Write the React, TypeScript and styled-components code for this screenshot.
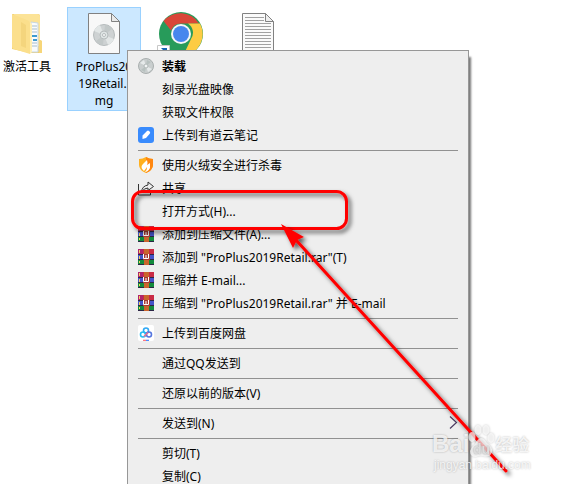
import React from "react";
import styled, { createGlobalStyle } from "styled-components";

const GlobalStyle = createGlobalStyle`
  * { box-sizing: border-box; }
  html, body { margin: 0; background: #fff; overflow: hidden; }
  body, button { font-family: "Noto Sans", "Noto Sans CJK SC", sans-serif; font-size: 12px; color: #000; }
`;

const Desktop = styled.main`
  position: relative;
  height: 100vh;
  overflow: hidden;
  background: #fff;
`;

const IconRow = styled.div`
  display: flex;
  align-items: flex-start;
  gap: 3px;
  padding-top: 7px;
  margin-left: -10px;
`;

const Shortcut = styled.button<{ $selected?: boolean }>`
  display: flex;
  flex-direction: column;
  align-items: center;
  flex: none;
  width: 74px;
  padding: 4px 0 0;
  min-height: 104px;
  border: 1px solid ${(p) => (p.$selected ? "#99d1ff" : "transparent")};
  background: ${(p) => (p.$selected ? "#cce8ff" : "transparent")};
  line-height: 17px;
`;

const Art = styled.span`
  display: block;
  width: 48px;
  height: 46px;
  svg { display: block; }
`;

const Line = styled.span`
  display: block;
  white-space: nowrap;
`;

const Menu = styled.ul`
  position: absolute;
  top: 50px;
  left: 127px;
  min-width: 342px;
  margin: 0;
  padding: 4px 10px;
  list-style: none;
  background: #eee;
  border: 1px solid #979797;
  box-shadow: 3px 6px 2px -1px #777;
`;

const Item = styled.li`
  display: block;
`;

const Entry = styled.button<{ $strong?: boolean }>`
  display: flex;
  align-items: center;
  gap: 8px;
  width: 100%;
  height: 23px;
  padding: 0 0 2px;
  border: 0;
  background: transparent;
  text-align: left;
  white-space: nowrap;
  font-weight: ${(p) => (p.$strong ? 700 : 400)};
`;

const Slot = styled.span`
  flex: none;
  width: 16px;
  height: 16px;
  svg { display: block; }
`;

const Label = styled.span`
  flex: 1;
`;

const Separator = styled.li`
  height: 7px;
  padding-top: 3px;
  &::before {
    content: "";
    display: block;
    height: 1px;
    background: #919191;
  }
`;

const Markup = styled.svg`
  position: absolute;
  top: 0;
  left: 0;
  pointer-events: none;
`;

const Watermark = styled.div`
  position: absolute;
  top: 422px;
  left: 432px;
  color: rgba(255, 255, 255, 0.8);
  text-shadow: 0 0 2px rgba(0, 0, 0, 0.3);
  white-space: nowrap;
  pointer-events: none;
`;

const Brand = styled.div`
  display: flex;
  align-items: flex-end;
  height: 36px;
  font: 700 24px/28px "Liberation Sans", "Noto Sans CJK SC", sans-serif;
`;

const BrandChinese = styled.span`
  font: 500 17px/28px "Noto Sans CJK SC", sans-serif;
`;

const Site = styled.div`
  margin-left: 2px;
  font: 12px/14px "Liberation Sans", sans-serif;
`;

const Paw = styled.svg`
  display: block;
  width: 28px;
  height: 34px;
  margin-left: -2px;
  filter: drop-shadow(0 0 1px rgba(0, 0, 0, 0.3));
`;

const FolderArt = () => (
  <svg width="48" height="46" viewBox="0 0 48 46">
    <path d="M9 2h26q2 0 2 2v24l2 1v12H27L9 37z" fill="#f0cf70" />
    <path d="M11 2h23q3 0 3 3v29H11z" fill="#fce397" />
    <path d="M28 10l7 1v29h-7z" fill="#f8fbfd" stroke="#c8d7df" />
    <path d="M29 14h5M29 17h5M29 20h5M29 31h5M29 34h5" stroke="#a8bdcc" />
    <path d="M29 23h5v2h-5zM30 27h4v2h-4z" fill="#3d9bd0" />
    <path d="M9 2l15 6q3 1 3 4v30L11 37q-2 0-2-3z" fill="#fbdf8c" />
    <path d="M18 10l5 3v23l-5-2z" fill="#f4d57d" />
    <path d="M27 10v32l2-2V12z" fill="#ffefb5" />
    <path d="M36 28l3 1v12h-3z" fill="#f7d679" />
  </svg>
);

const DiscArt = () => (
  <svg width="48" height="46" viewBox="0 0 48 46">
    <path d="M8.500 1.500h23l8 8v32h-31z" fill="#f8f8f8" stroke="#818181" />
    <path d="M31.500 1.500v8h8z" fill="#e9e9e9" stroke="#818181" />
    <circle cx="24" cy="23" r="10.500" fill="#ced2d3" stroke="#b6bbbc" />
    <path d="M24 23L14 19a11 11 0 0 1 6-6zM24 23l10 4a11 11 0 0 1-6 6z" fill="#e2e6e6" />
    <path d="M24 23l1-10a11 11 0 0 1 7 4zM24 23l-1 10a11 11 0 0 1-7-4z" fill="#c2c8c8" />
    <circle cx="24" cy="23" r="4" fill="#dfe5e5" stroke="#b6bcbd" />
    <circle cx="24" cy="23" r="1.500" fill="#fff" stroke="#b4babb" />
  </svg>
);

const ChromeArt = () => (
  <svg width="48" height="46" viewBox="0 0 48 46">
    <circle cx="24" cy="22" r="22" fill="#279b5a" />
    <path d="M6.500 9A22 22 0 0 1 42 11.500H24a11 11 0 0 0-10 7z" fill="#d94638" />
    <path d="M43 11.500A22 22 0 0 1 26 44l8-17a11 11 0 0 0-3-15.500z" fill="#fdcc43" />
    <circle cx="24" cy="22" r="10" fill="#f6f6f6" />
    <circle cx="24" cy="22" r="8" fill="#4786ed" />
    <path d="M.500 33.500h12v12H.5z" fill="#fff" stroke="#c7c7c7" />
    <path d="M4 36h6v6l-2-2-4 5H2l4-7z" fill="#1764b3" />
  </svg>
);

const TextArt = () => (
  <svg width="48" height="46" viewBox="0 0 48 46">
    <path d="M8.500 1.500h23l8 8v36h-31z" fill="#fafafa" stroke="#818181" />
    <path d="M11 5.500h19M11 8.500h19M11 11.500h26M11 14.500h26M11 17.500h26M11 20.500h26M11 23.500h26M11 26.500h26M11 29.500h26M11 32.500h26M11 35.500h26M11 38.500h26" stroke="#a1a1a1" />
    <path d="M31.500 1.500v8h8z" fill="#eee" stroke="#818181" />
  </svg>
);

const MountIcon = () => (
  <svg width="16" height="16" viewBox="0 0 16 16">
    <circle cx="8" cy="8" r="7.500" fill="#c9cece" stroke="#a9afaf" />
    <path d="M8 8L2 5l4-3zM8 8l6 3-4 3z" fill="#e6eaea" />
    <path d="M8 8L9 2l4 2zM8 8l-1 6-4-2z" fill="#b7c1bf" />
    <circle cx="8" cy="8" r="2" fill="#f2f5f5" stroke="#b0b8b7" />
  </svg>
);

const NoteIcon = () => (
  <svg width="16" height="16" viewBox="0 0 16 16">
    <rect width="16" height="16" rx="3" fill="#398bfd" />
    <path d="M4.500 12V8.500L9 4q1-1 2 0l1 1q.500 1-.5 2L8 11z" fill="#fff" />
  </svg>
);

const FireIcon = () => (
  <svg width="16" height="16" viewBox="0 0 16 16">
    <path d="M1 2q4 0 7-2 3 2 7 2v6q0 5-7 8-7-3-7-8z" fill="#ffb01f" />
    <path d="M8 0q3 2 7 2v6q0 5-7 8z" fill="#ff8710" />
    <path d="M5 13q-3-3 0-6l4-4q1 3 0 5l3-2v5q-2 4-5 4 2-2 2-5l-3 4z" fill="#fff" />
  </svg>
);

const ShareIcon = () => (
  <svg width="16" height="16" viewBox="0 0 16 16" fill="none" stroke="#333">
    <path d="M.500 4v11H12.500v-3" />
    <path d="M3.500 12Q4 6 10 5V2l5.500 4.500-5.500 4V8Q6 8 3.500 12z" />
  </svg>
);

const ArchiveIcon = () => (
  <svg width="16" height="16" viewBox="0 0 16 16">
    <path d="M0 0h16v5H0z" fill="#c92a45" />
    <path d="M0 0h5v5H0z" fill="#b0246b" />
    <path d="M0 5h16v6H0z" fill="#4453c9" />
    <path d="M0 11h16v5H0z" fill="#128a3c" />
    <path d="M0 5.500h16M0 10.500h16M0 15.500h16" stroke="#2c2545" />
    <path d="M1 1h1v3H1zM1 7h1v3H1zM1 12h1v2H1z" fill="#f0d060" />
    <path d="M6 0h5v16H6z" fill="#c9652d" />
    <path d="M5 5h7v6H5z" fill="#a73a35" />
    <path d="M5.500 5v4.500h5V5M8 6v3" fill="none" stroke="#fff" />
  </svg>
);

const CloudIcon = () => (
  <svg width="16" height="16" viewBox="0 0 16 16">
    <rect width="16" height="16" rx="2" fill="#fff" />
    <g fill="none" strokeWidth="1.600">
      <circle cx="8" cy="5.500" r="2.500" stroke="#31a9f5" />
      <circle cx="5" cy="9.500" r="2.500" stroke="#24bdf4" />
      <circle cx="11" cy="9.500" r="2.500" stroke="#5576df" />
      <path d="M6 11.500l4-4" stroke="#e86f94" />
      <path d="M5 15.500h3" stroke="#ff7682" />
      <path d="M8 15.500h3" stroke="#4d8efc" />
    </g>
  </svg>
);

const Chevron = () => (
  <svg width="9" height="15" viewBox="0 0 9 15" fill="none">
    <path d="M1 1.500l6.500 6L1 13.500" stroke="#4c3c62" strokeWidth="1.200" />
  </svg>
);

type MenuEntry = { label: string; icon?: React.ReactNode; strong?: boolean; more?: boolean };

const groups: MenuEntry[][] = [
  [
    { label: "装载", icon: <MountIcon />, strong: true },
    { label: "刻录光盘映像" },
    { label: "获取文件权限" },
    { label: "上传到有道云笔记", icon: <NoteIcon /> },
  ],
  [
    { label: "使用火绒安全进行杀毒", icon: <FireIcon /> },
    { label: "共享", icon: <ShareIcon /> },
    { label: "打开方式(H)..." },
    { label: "添加到压缩文件(A)...", icon: <ArchiveIcon /> },
    { label: '添加到 "ProPlus2019Retail.rar"(T)', icon: <ArchiveIcon /> },
    { label: "压缩并 E-mail...", icon: <ArchiveIcon /> },
    { label: '压缩到 "ProPlus2019Retail.rar" 并 E-mail', icon: <ArchiveIcon /> },
  ],
  [{ label: "上传到百度网盘", icon: <CloudIcon /> }],
  [{ label: "通过QQ发送到" }],
  [{ label: "还原以前的版本(V)" }],
  [{ label: "发送到(N)", more: true }],
  [{ label: "剪切(T)" }, { label: "复制(C)" }],
];

export default function App() {
  return (
    <Desktop>
      <GlobalStyle />
      <IconRow>
        <Shortcut>
          <Art><FolderArt /></Art>
          <Line>激活工具</Line>
        </Shortcut>
        <Shortcut $selected>
          <Art><DiscArt /></Art>
          <Line>ProPlus20</Line>
          <Line>19Retail.i</Line>
          <Line>mg</Line>
        </Shortcut>
        <Shortcut aria-label="Chrome">
          <Art><ChromeArt /></Art>
        </Shortcut>
        <Shortcut aria-label="文本文档">
          <Art><TextArt /></Art>
        </Shortcut>
      </IconRow>

      <Menu>
        {groups.map((group, index) => (
          <React.Fragment key={index}>
            {index > 0 && <Separator role="separator" />}
            {group.map((entry) => (
              <Item key={entry.label}>
                <Entry $strong={entry.strong}>
                  <Slot>{entry.icon}</Slot>
                  <Label>{entry.label}</Label>
                  {entry.more && <Chevron />}
                </Entry>
              </Item>
            ))}
          </React.Fragment>
        ))}
      </Menu>

      <Markup width="565" height="484" viewBox="0 0 565 484" aria-hidden="true">
        <defs>
          <filter id="shade" x="-10%" y="-20%" width="125%" height="150%">
            <feDropShadow dx="3" dy="3" stdDeviation="2" floodColor="#000" floodOpacity="0.6" />
          </filter>
        </defs>
        <rect x="132.500" y="191.500" width="214" height="37" rx="10" fill="none" stroke="#f00" strokeWidth="3" filter="url(#shade)" />
        <g filter="url(#shade)">
          <path d="M296 240L506 471" stroke="#f00" strokeWidth="3" strokeLinecap="round" />
          <path d="M281 224l23 13-7 3-4 8z" fill="#f00" />
        </g>
      </Markup>

      <Watermark>
        <Brand>
          <span>Bai</span>
          <Paw viewBox="0 0 28 34" aria-hidden="true">
            <g fill="#fff" fillOpacity="0.700">
              <ellipse cx="5" cy="13" rx="3.500" ry="5" />
              <ellipse cx="11" cy="6" rx="3.500" ry="5" />
              <ellipse cx="19" cy="6" rx="3.500" ry="5" />
              <ellipse cx="24" cy="14" rx="3.500" ry="5" />
              <path d="M14 14q3 0 6 5 6 4 5 9-2 6-9 4-3-1-7 1-6 0-6-6 1-4 5-7 3-6 6-6z" />
            </g>
            <text x="6" y="30" fontFamily="Liberation Sans" fontSize="14" fontWeight="700" fill="#ddd">du</text>
          </Paw>
          <BrandChinese>经验</BrandChinese>
        </Brand>
        <Site>jingyan.baidu.com</Site>
      </Watermark>
    </Desktop>
  );
}
